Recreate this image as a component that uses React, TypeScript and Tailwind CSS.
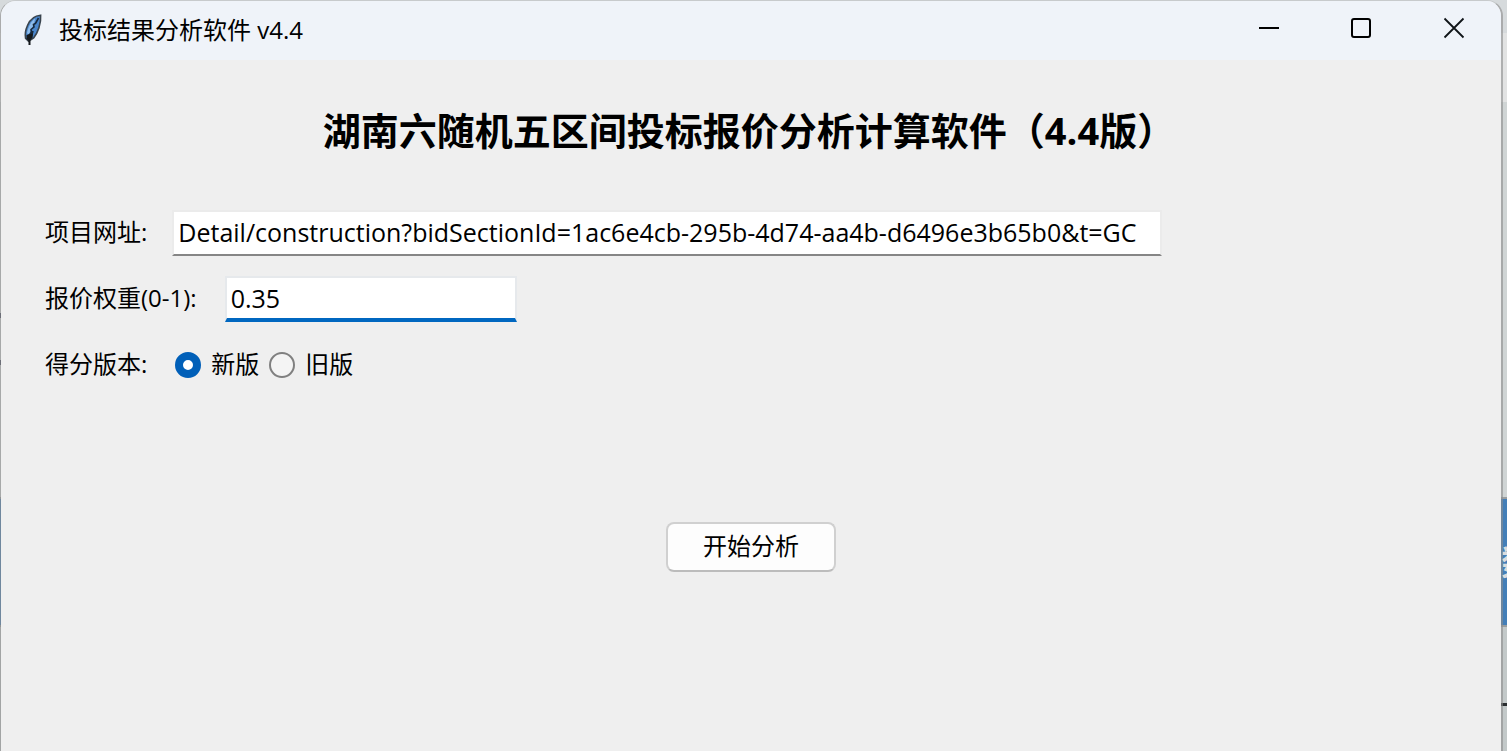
import { useState } from 'react'

const VERSIONS = [
  { value: 'new', label: '新版' },
  { value: 'old', label: '旧版' },
]

function FeatherIcon() {
  return (
    <svg width="20" height="34" viewBox="0 0 20 34" aria-hidden="true">
      <path
        d="M17.6 1.2C12 1.6 7 5.6 4.6 11.2 2.6 15.6 1.8 20.4 2.6 24.4L5.6 27.2 10.6 24C14.6 19 18.4 9.6 17.6 1.2Z"
        fill="#4a86cc"
        stroke="#39434d"
        strokeWidth="1.6"
      />
      <path d="M12 4.5C8 7.5 5 13 4 19.5L6 20 11 10Z" fill="#8fbdec" />
      <path
        d="M15.5 4 12.5 9.5 10.5 10.5 11 13 8 15.5 8.5 18 6.5 21M10 17 8.5 22"
        fill="none"
        stroke="#17283c"
        strokeWidth="1.6"
      />
      <path d="M3.5 21 10 19.5 9.5 24 6 27 3.5 25Z" fill="#14181c" />
      <path d="M6.5 20V31" stroke="#14181c" strokeWidth="2" />
    </svg>
  )
}

function TitleBar() {
  return (
    <header className="flex h-[59px] items-center bg-[#eff3f9] pl-[22px]">
      <FeatherIcon />
      <span className="ml-4 flex-1 pb-[2px] text-2xl">投标结果分析软件 v4.4</span>
      <div className="flex h-full items-start">
        <button type="button" aria-label="最小化" className="flex h-[54px] w-[92px] items-center justify-center">
          <svg width="22" height="22" viewBox="0 0 22 22">
            <path d="M1 11H21" stroke="#000" strokeWidth="2" />
          </svg>
        </button>
        <button type="button" aria-label="最大化" className="flex h-[54px] w-[92px] items-center justify-center">
          <svg width="22" height="22" viewBox="0 0 22 22">
            <rect x="2" y="2" width="18" height="18" rx="2" fill="none" stroke="#000" strokeWidth="2" />
          </svg>
        </button>
        <button type="button" aria-label="关闭" className="flex h-[54px] w-[94px] items-center justify-center">
          <svg width="22" height="22" viewBox="0 0 22 22">
            <path d="M1.5 1.5 20.5 20.5M20.5 1.5 1.5 20.5" stroke="#0f1418" strokeWidth="1.8" />
          </svg>
        </button>
      </div>
    </header>
  )
}

// the page that shows around the edges of the window
function Backdrop() {
  return (
    <div className="absolute inset-0 flex flex-col overflow-hidden">
      <div className="h-[33px] bg-[#d6dadc]" />
      <div className="h-[69px] bg-[#e2e3e3]" />
      <div className="flex h-[395px] flex-col items-start gap-[42px] bg-[#d0d5d5] pt-[211px]">
        <div className="h-[5px] w-1 bg-[#3c4258]" />
        <div className="h-[5px] w-1 bg-[#3c4258]" />
      </div>
      <div className="flex h-[130px] items-center justify-end border-y-2 border-[#9a9ea0] bg-[#447fb8]">
        <span className="-mr-7 text-[34px] font-bold text-[#d9dde0]">数</span>
      </div>
      <div className="flex flex-1 justify-end bg-[#c3c9c9] pt-[76px]">
        <div className="h-[3px] w-2 bg-[#2a2d30]" />
      </div>
    </div>
  )
}

export default function App() {
  const [url, setUrl] = useState('Detail/construction?bidSectionId=1ac6e4cb-295b-4d74-aa4b-d6496e3b65b0&t=GC')
  const [weight, setWeight] = useState('0.35')
  const [version, setVersion] = useState('new')

  return (
    <div className="relative flex min-h-screen font-['Open_Sans','Noto_Sans_CJK_SC',sans-serif] text-black">
      <Backdrop />
      <div className="relative mr-1 flex flex-1 flex-col overflow-hidden rounded-t-2xl border-l border-r-2 border-t border-[#8c8c8c]/60 border-t-[#8c8c8c]/20 bg-[#efefef] bg-clip-padding">
        <TitleBar />
        <main className="flex flex-col px-11 pt-[42px]">
          <h1 className="pr-1 text-center text-[38px] font-bold leading-[56px]">
            湖南六随机五区间投标报价分析计算软件（4.4版）
          </h1>

          <form className="mt-[52px] flex flex-col gap-5 text-2xl" onSubmit={(e) => e.preventDefault()}>
            <div className="flex h-[46px] items-center gap-[25px]">
              <label htmlFor="url" className="shrink-0 pb-[2px]">
                项目网址:
              </label>
              <input
                id="url"
                type="text"
                value={url}
                onChange={(e) => setUrl(e.target.value)}
                className="h-[46px] w-[990px] min-w-0 border-2 border-[#ebebeb] border-b-[#868686] bg-white px-1 pb-[2px] text-[25px] outline-none"
              />
            </div>

            <div className="flex h-[46px] items-center gap-7">
              <label htmlFor="weight" className="shrink-0 pb-[2px]">
                报价权重(0-1):
              </label>
              <input
                id="weight"
                type="text"
                value={weight}
                onChange={(e) => setWeight(e.target.value)}
                className="h-[46px] w-[292px] min-w-0 border-x-2 border-b-4 border-t-2 border-[#e6e9ec] border-b-[#0067c0] bg-white px-1 text-[25px] outline-none"
              />
            </div>

            <div role="radiogroup" aria-labelledby="version-label" className="flex h-[46px] items-center">
              <span id="version-label" className="mr-7 pb-[2px]">
                得分版本:
              </span>
              <div className="flex gap-[10px]">
                {VERSIONS.map((item) => (
                  <label key={item.value} className="flex items-center gap-[10px]">
                    <input
                      type="radio"
                      name="version"
                      value={item.value}
                      checked={version === item.value}
                      onChange={() => setVersion(item.value)}
                      className="size-[26px] appearance-none rounded-full border-2 border-[#808080] bg-[#f4f4f4] checked:border-8 checked:border-[#005fb8] checked:bg-white"
                    />
                    <span className="pb-[2px]">{item.label}</span>
                  </label>
                ))}
              </div>
            </div>

            <button
              type="submit"
              className="mt-[114px] h-[50px] w-[170px] self-center rounded-lg border-2 border-[#d0d0d0] border-b-[#bcbcbc] bg-[#fdfdfd] pb-[2px]"
            >
              开始分析
            </button>
          </form>
        </main>
      </div>
    </div>
  )
}
